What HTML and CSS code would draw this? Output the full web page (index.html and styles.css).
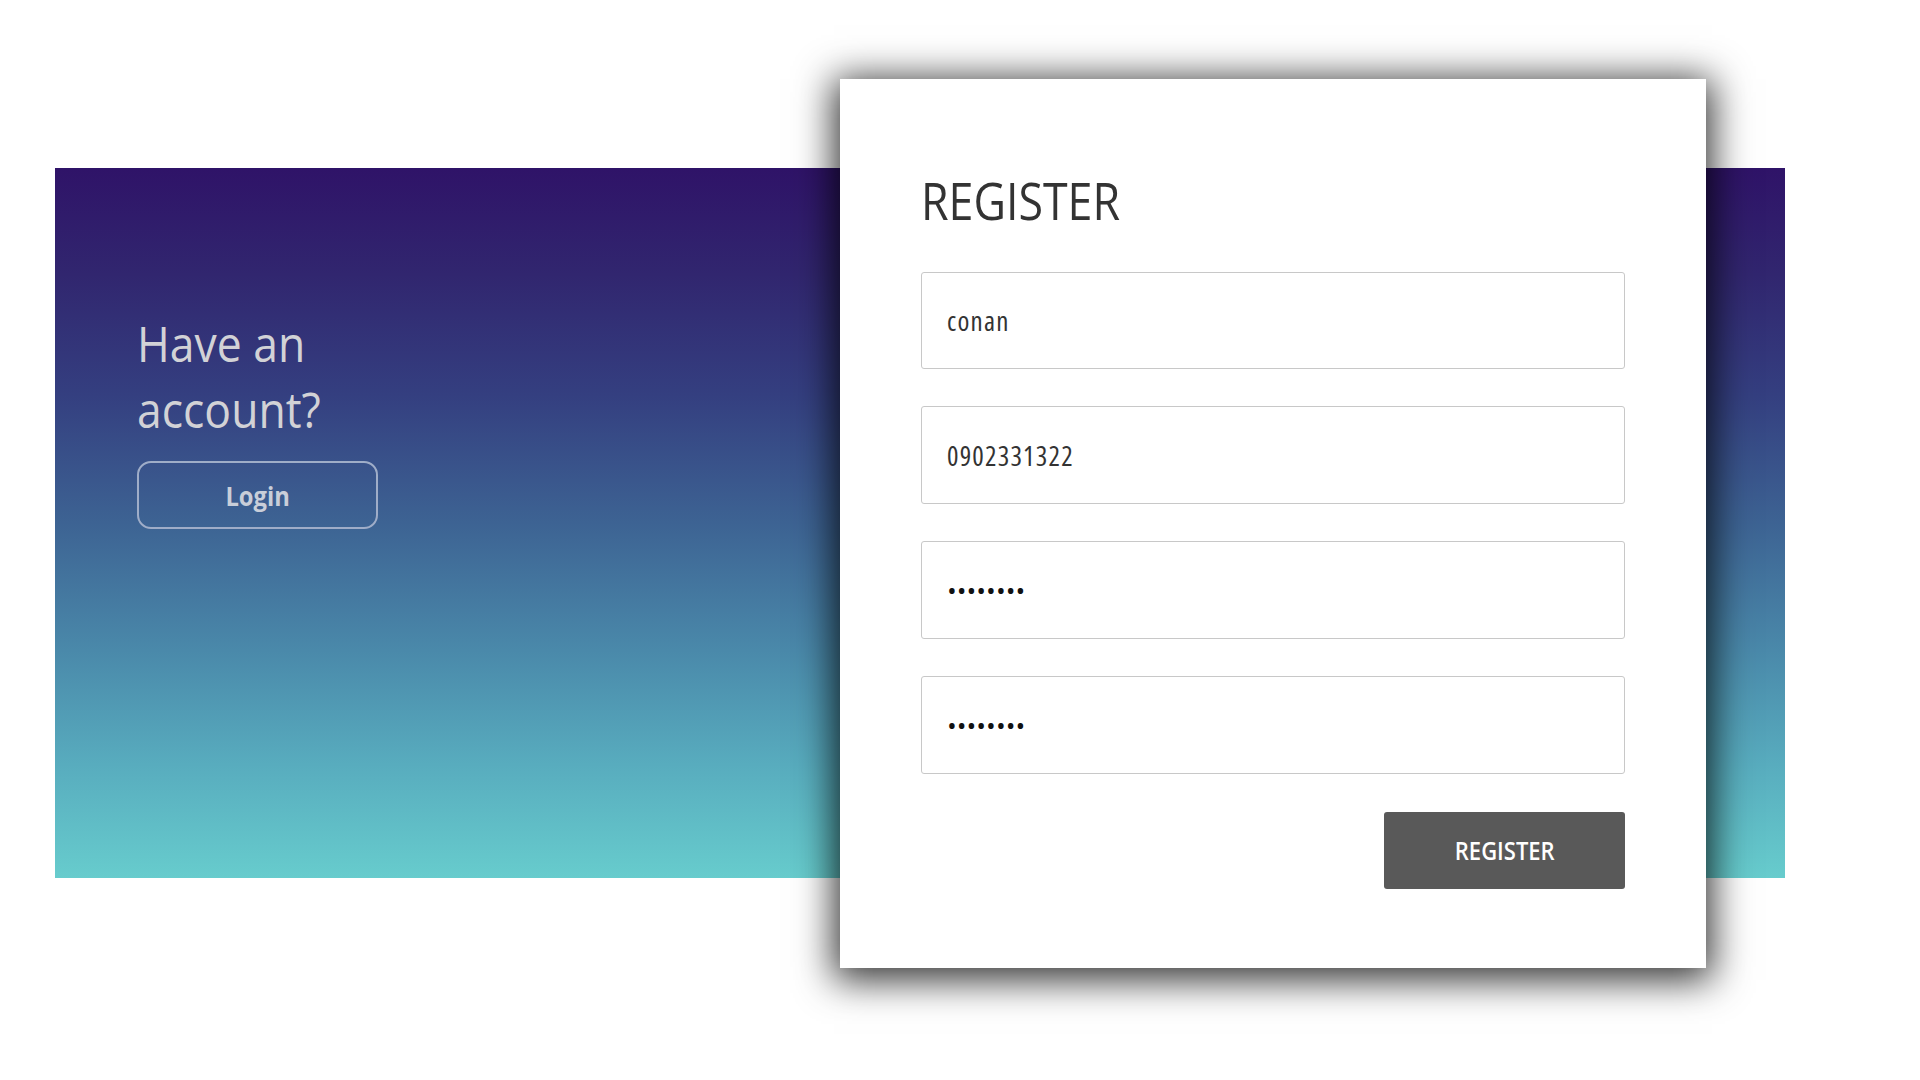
FILE: index.html
```html
<!DOCTYPE html>
<html lang="en">
<head>
<meta charset="utf-8">
<title>Register</title>
<link rel="stylesheet" href="styles.css">
</head>
<body>
<div class="panel">
  <div class="side">
    <h2 class="side-title"><span class="narrow-line">Have an</span><span class="narrow-line">account?</span></h2>
    <button class="login-btn" type="button"><span class="btn-label">Login</span></button>
  </div>
  <form class="card">
    <h1 class="card-title"><span class="narrow">REGISTER</span></h1>
    <input class="field" type="text" value="conan">
    <input class="field" type="text" value="0902331322">
    <input class="field field-secret" type="password" value="12345678">
    <input class="field field-secret" type="password" value="12345678">
    <div class="actions">
      <button class="register-btn" type="button"><span class="btn-label">REGISTER</span></button>
    </div>
  </form>
</div>
</body>
</html>
```

FILE: styles.css
```css
html, body {
  margin: 0;
  padding: 0;
  background: #ffffff;
}

body {
  font-family: "Open Sans", "Noto Sans", sans-serif;
  width: 1920px;
  height: 1080px;
  overflow: hidden;
}

.panel {
  margin: 168px 0 0 55px;
  width: 1730px;
  height: 710px;
  display: flex;
  align-items: center;
  background: linear-gradient(to bottom,
    #2f1368 0%,
    #31266f 15%,
    #343f80 32%,
    #3d6393 50%,
    #4a89aa 68%,
    #58acbe 84%,
    #67cccd 100%);
}

.side {
  align-self: flex-start;
  padding: 142px 0 0 82px;
  display: flex;
  flex-direction: column;
  align-items: flex-start;
}

.side-title {
  margin: 0;
  font-size: 50px;
  line-height: 66px;
  font-weight: 400;
  color: #d2d2d6;
  display: flex;
  flex-direction: column;
  align-items: flex-start;
}

.narrow-line {
  display: inline-block;
  transform: scaleX(0.89);
  transform-origin: left center;
}

.narrow {
  display: inline-block;
  transform: scaleX(0.86);
  transform-origin: left center;
}

.btn-label {
  display: inline-block;
  transform: scaleX(0.88);
  transform-origin: center center;
}

.login-btn {
  margin-top: 19px;
  width: 241px;
  height: 68px;
  padding: 0;
  border: 2px solid #9fadc8;
  border-radius: 14px;
  background: transparent;
  font-family: inherit;
  font-size: 27px;
  font-weight: 700;
  color: #c9ced9;
  cursor: pointer;
}

.card {
  margin-left: auto;
  margin-right: 79px;
  width: 866px;
  height: 889px;
  box-sizing: border-box;
  padding: 95px 81px 79px 81px;
  background: #ffffff;
  box-shadow: 0 6px 36px 6px rgba(0, 0, 0, 0.8);
  display: flex;
  flex-direction: column;
  flex-shrink: 0;
}

.card-title {
  margin: 0 0 46px 0;
  font-size: 52px;
  line-height: 52px;
  font-weight: 400;
  color: #333333;
}

.field {
  display: block;
  box-sizing: border-box;
  width: 704px;
  height: 98px;
  margin: 0 0 37px 0;
  padding: 0 25px;
  border: 1px solid #c8c8c8;
  border-radius: 3px;
  background: #ffffff;
  font-family: inherit;
  font-size: 27px;
  font-stretch: 75%;
  letter-spacing: 1.2px;
  color: #333333;
  outline: none;
}

.field-secret {
  font-stretch: 100%;
  letter-spacing: 0;
  font-size: 26px;
  color: #111111;
}

.field:last-of-type {
  margin-bottom: 38px;
}

.actions {
  display: flex;
  justify-content: flex-end;
}

.register-btn {
  width: 241px;
  height: 77px;
  padding: 0;
  border: none;
  border-radius: 3px;
  background: #595959;
  font-family: inherit;
  font-size: 25px;
  font-weight: 600;
  color: #ffffff;
  cursor: pointer;
}
```
